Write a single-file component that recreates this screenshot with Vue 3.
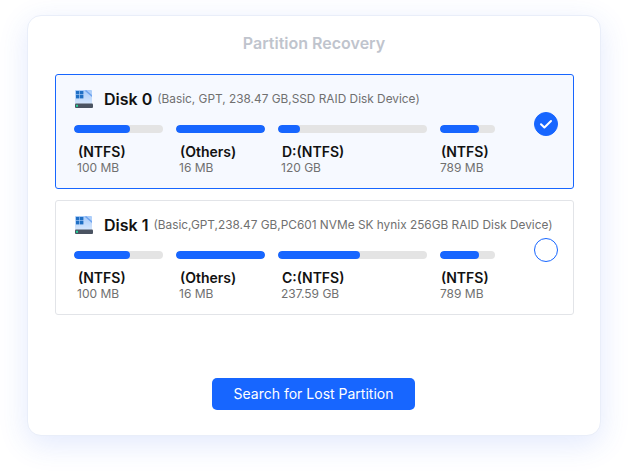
<script setup>
const disks = [
  {
    name: 'Disk 0',
    info: '(Basic, GPT, 238.47 GB,SSD RAID Disk Device)',
    selected: true,
    parts: [
      { label: '(NTFS)', size: '100 MB', width: 89, used: 63 },
      { label: '(Others)', size: '16 MB', width: 89, used: 100 },
      { label: 'D:(NTFS)', size: '120 GB', width: 149, used: 15 },
      { label: '(NTFS)', size: '789 MB', width: 55, used: 71 }
    ]
  },
  {
    name: 'Disk 1',
    info: '(Basic,GPT,238.47 GB,PC601 NVMe SK hynix 256GB RAID Disk Device)',
    selected: false,
    parts: [
      { label: '(NTFS)', size: '100 MB', width: 89, used: 63 },
      { label: '(Others)', size: '16 MB', width: 89, used: 100 },
      { label: 'C:(NTFS)', size: '237.59 GB', width: 149, used: 55 },
      { label: '(NTFS)', size: '789 MB', width: 55, used: 71 }
    ]
  }
]
</script>

<template>
  <div class="page">
    <div class="card">
      <div class="title">Partition Recovery</div>
      <div class="disks">
        <div v-for="disk in disks" :key="disk.name" class="disk" :class="{ selected: disk.selected }">
          <div class="disk_head">
            <svg class="disk_icon" width="20" height="20" viewBox="0 0 20 20">
              <defs>
                <linearGradient id="disk_body" x1="0" y1="0" x2="0" y2="1">
                  <stop offset="0" stop-color="#a8cbf9" />
                  <stop offset="1" stop-color="#d6e7fd" />
                </linearGradient>
              </defs>
              <path d="M2 1h15a1 1 0 0 1 1 1v13H1V2a1 1 0 0 1 1-1z" fill="url(#disk_body)" />
              <path d="M11 2l1-1 6 5v2z" fill="#6fa4ef" />
              <rect x="1" y="14.5" width="18" height="4.5" rx="1" fill="#4a5361" />
              <rect x="2" y="15.8" width="2" height="2" fill="#25d49a" />
              <rect x="2" y="2" width="3.4" height="3.4" fill="#1f6fc4" />
              <rect x="6" y="2" width="3.4" height="3.4" fill="#1f6fc4" />
              <rect x="2" y="6" width="3.4" height="3.4" fill="#1f6fc4" />
              <rect x="6" y="6" width="3.4" height="3.4" fill="#1f6fc4" />
            </svg>
            <span class="disk_name">{{ disk.name }}</span>
            <span class="disk_info">{{ disk.info }}</span>
          </div>
          <div class="parts">
            <div v-for="(part, i) in disk.parts" :key="i" class="part" :style="{ width: part.width + 'px' }">
              <div class="bar">
                <div class="bar_fill" :style="{ width: part.used + '%' }"></div>
              </div>
              <div class="part_label">{{ part.label }}</div>
              <div class="part_size">{{ part.size }}</div>
            </div>
          </div>
          <div class="radio" :class="{ checked: disk.selected }">
            <svg v-if="disk.selected" width="14" height="14" viewBox="0 0 14 14">
              <path d="M2 7.2l3.4 3.3L12 4" fill="none" stroke="#fff" stroke-width="2" stroke-linecap="round" stroke-linejoin="round" />
            </svg>
          </div>
        </div>
      </div>
      <div class="button">Search for Lost Partition</div>
    </div>
  </div>
</template>

<style scoped>
.page {
  width: 628px;
  height: 475px;
  padding: 15px 27px 0;
  box-sizing: border-box;
  background-color: #fff;
  font-family: Inter, "Liberation Sans", sans-serif;
  overflow: hidden;
}
.card {
  width: 574px;
  height: 421px;
  box-sizing: border-box;
  padding: 17px 26px 0 27px;
  background-color: #fff;
  border: 1px solid #e9eef9;
  border-radius: 14px;
  box-shadow: 0 8px 30px rgba(50, 100, 240, .14);
  display: flex;
  flex-direction: column;
}
.title {
  font-size: 16px;
  font-weight: 600;
  line-height: 20px;
  color: #bfc4cd;
  text-align: center;
  margin-right: 1px;
}
.disks {
  margin-top: 21px;
  display: flex;
  flex-direction: column;
  gap: 11px;
}
.disk {
  position: relative;
  height: 115px;
  box-sizing: border-box;
  padding: 13px 18px 0;
  border: 1px solid #e2e4e8;
  border-radius: 3px;
  background-color: #fff;
}
.disk.selected {
  border-color: #1766ff;
  background-color: #f6f9ff;
}
.disk_head {
  display: flex;
  align-items: center;
  height: 22px;
  white-space: nowrap;
}
.disk_icon {
  margin-right: 10px;
  flex-shrink: 0;
}
.disk_name {
  font-size: 16px;
  font-weight: 600;
  color: #111;
  margin-right: 5px;
}
.disk_info {
  font-size: 11.85px;
  color: #707070;
}
.parts {
  margin-top: 15px;
  display: flex;
  gap: 13px;
}
.bar {
  height: 8px;
  border-radius: 4px;
  background-color: #e4e4e4;
  overflow: hidden;
}
.bar_fill {
  height: 100%;
  border-radius: 4px;
  background-color: #1766ff;
}
.part_label {
  margin: 11px 0 0 4px;
  font-size: 14px;
  font-weight: 600;
  line-height: 16px;
  color: #111;
  white-space: nowrap;
}
.part_size {
  margin: 0 0 0 3px;
  font-size: 12px;
  line-height: 16px;
  color: #707070;
  white-space: nowrap;
}
.part:last-of-type .part_label {
  margin-left: 1px;
}
.part:last-of-type .part_size {
  margin-left: 0;
}
.radio {
  position: absolute;
  right: 15px;
  top: 37px;
  width: 24px;
  height: 24px;
  box-sizing: border-box;
  border: 1px solid #1766ff;
  border-radius: 50%;
  background-color: #fff;
  display: flex;
  align-items: center;
  justify-content: center;
}
.radio.checked {
  background-color: #1766ff;
}
.button {
  margin: 63px 0 0 157px;
  width: 203px;
  height: 32px;
  border-radius: 5px;
  background-color: #1766ff;
  color: #fff;
  font-size: 14px;
  line-height: 31px;
  text-align: center;
}
</style>
